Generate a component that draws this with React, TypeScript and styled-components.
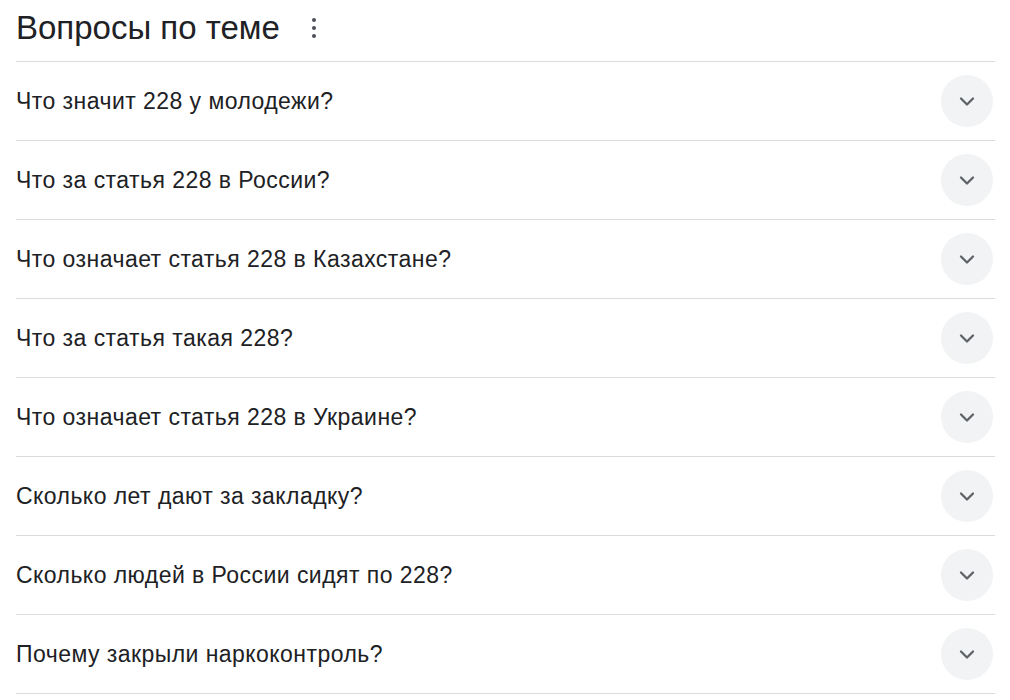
import React from "react";
import styled, { createGlobalStyle } from "styled-components";

const GlobalStyle = createGlobalStyle`
  body {
    margin: 0;
    background: #fff;
    font-family: "Liberation Sans", Arial, sans-serif;
    color: #202124;
  }
`;

const questions = [
  "Что значит 228 у молодежи?",
  "Что за статья 228 в России?",
  "Что означает статья 228 в Казахстане?",
  "Что за статья такая 228?",
  "Что означает статья 228 в Украине?",
  "Сколько лет дают за закладку?",
  "Сколько людей в России сидят по 228?",
  "Почему закрыли наркоконтроль?",
];

const Container = styled.div`
  padding: 0 15px 0 16px;
`;

const Header = styled.div`
  display: flex;
  align-items: center;
  height: 61px;
`;

const Title = styled.h2`
  margin: -6px 0 0;
  font-size: 33px;
  font-weight: 400;
  line-height: 38px;
  color: #202124;
`;

const MenuButton = styled.div`
  display: flex;
  align-items: center;
  justify-content: center;
  width: 24px;
  height: 24px;
  margin: -6px 0 0 22px;
  color: #4d5156;
`;

const List = styled.div`
  border-bottom: 1px solid #dadce0;
`;

const Row = styled.div`
  display: flex;
  align-items: center;
  justify-content: space-between;
  height: 78px;
  border-top: 1px solid #dadce0;
`;

const Question = styled.span`
  font-size: 23px;
  letter-spacing: 0.45px;
  line-height: 28px;
  color: #202124;
`;

const Toggle = styled.div`
  display: flex;
  align-items: center;
  justify-content: center;
  width: 52px;
  height: 52px;
  margin-right: 2px;
  border-radius: 50%;
  background: #f1f3f4;
  color: #5f6368;
`;

const Kebab = () => (
  <svg width="24" height="24" viewBox="0 0 24 24" fill="currentColor">
    <circle cx="12" cy="4" r="2" />
    <circle cx="12" cy="12" r="2" />
    <circle cx="12" cy="20" r="2" />
  </svg>
);

const Chevron = () => (
  <svg width="24" height="24" viewBox="0 0 24 24" fill="none">
    <polyline
      points="6,9.5 12,15.5 18,9.5"
      stroke="currentColor"
      strokeWidth="2.3"
      strokeLinecap="round"
      strokeLinejoin="round"
    />
  </svg>
);

const App: React.FC = () => (
  <>
    <GlobalStyle />
    <Container>
      <Header>
        <Title>Вопросы по теме</Title>
        <MenuButton>
          <Kebab />
        </MenuButton>
      </Header>
      <List>
        {questions.map((q, i) => (
          <Row key={i}>
            <Question>{q}</Question>
            <Toggle>
              <Chevron />
            </Toggle>
          </Row>
        ))}
      </List>
    </Container>
  </>
);

export default App;
